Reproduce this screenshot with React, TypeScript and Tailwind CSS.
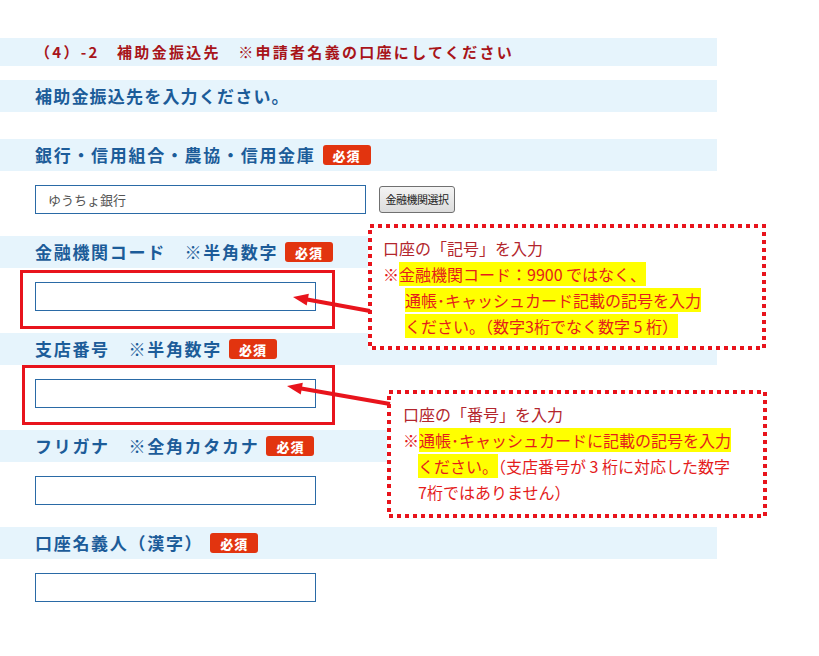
import React from "react";

const FONT = { fontFamily: '"Noto Sans CJK JP", "Noto Sans", sans-serif' };

const Badge: React.FC = () => (
  <span className="ml-[7px] inline-flex h-[20px] w-[48px] items-center justify-center rounded-[3px] bg-[#e2340f] text-[13px] font-black leading-none tracking-[1px] text-white">
    必須
  </span>
);

type FieldProps = {
  label: string;
  inputWidth: string;
  value?: string;
  withButton?: boolean;
  marked?: string;
};

const Field: React.FC<FieldProps> = ({ label, inputWidth, value, withButton, marked }) => (
  <div className="relative h-[97px]">
    <div className="flex h-[32px] items-center bg-[#e6f4fc] pl-[35px]">
      <span className="text-[17px] font-bold tracking-[1.7px] text-[#1c5c99]">{label}</span>
      <Badge />
    </div>
    <div className="mt-[14px] flex items-center gap-[13px] pl-[35px]">
      <div
        className={`flex h-[29px] items-center border border-[#2a6aa6] bg-white pl-[12px] text-[13px] text-[#555] ${inputWidth}`}
      >
        {value}
      </div>
      {withButton && (
        <button className="h-[27px] w-[76px] rounded-[3px] border border-[#707070] bg-gradient-to-b from-[#f4f4f4] to-[#dcdcdc] text-[11px] tracking-[-0.5px] text-[#222]">
          金融機関選択
        </button>
      )}
    </div>
    {marked && <div className={`absolute border-[3px] border-[#e8141c] ${marked}`} />}
  </div>
);

const DottedFrame: React.FC = () => (
  <svg className="absolute inset-0 h-full w-full" preserveAspectRatio="none">
    <rect x="2" y="2" width="calc(100% - 4px)" height="calc(100% - 4px)" fill="none" stroke="#e8141c" strokeWidth="4" strokeDasharray="4 4" />
  </svg>
);

const arrow = (tx: number, ty: number, ex: number, ey: number) => {
  const len = Math.hypot(ex - tx, ey - ty);
  const dx = (ex - tx) / len;
  const dy = (ey - ty) / len;
  const bx = tx + dx * 15;
  const by = ty + dy * 15;
  const px = -dy * 6;
  const py = dx * 6;
  return (
    <g>
      <line x1={bx - dx * 2} y1={by - dy * 2} x2={ex} y2={ey} stroke="#e8141c" strokeWidth="4" />
      <polygon points={`${tx},${ty} ${bx + px},${by + py} ${bx - px},${by - py}`} fill="#e8141c" />
    </g>
  );
};

const Hl: React.FC<{ children: React.ReactNode }> = ({ children }) => (
  <span className="bg-[#ffff00]">{children}</span>
);

export default function App() {
  return (
    <div className="relative h-[656px] w-[819px] overflow-hidden bg-white" style={FONT}>
      <div className="w-[717px] pt-[38px]">
        <div className="flex h-[28px] items-center bg-[#e6f4fc] pl-[35px] text-[15px] font-bold tracking-[2.3px] text-[#a8141a]">
          （4）-2　補助金振込先　※申請者名義の口座にしてください
        </div>
        <div className="mt-[14px] flex h-[32px] items-center bg-[#e6f4fc] pl-[35px] text-[17px] font-bold tracking-[1.2px] text-[#1c5c99]">
          補助金振込先を入力ください。
        </div>
        <div className="mt-[27px]">
          <Field label="銀行・信用組合・農協・信用金庫" inputWidth="w-[331px]" value="ゆうちょ銀行" withButton />
          <Field
            label="金融機関コード　※半角数字"
            inputWidth="w-[281px]"
            marked="left-[20px] top-[34px] h-[59px] w-[315px]"
          />
          <Field
            label="支店番号　※半角数字"
            inputWidth="w-[281px]"
            marked="left-[22px] top-[32px] h-[60px] w-[313px]"
          />
          <Field label="フリガナ　※全角カタカナ" inputWidth="w-[281px]" />
          <Field label="口座名義人（漢字）" inputWidth="w-[281px]" />
        </div>
      </div>

      {/* callout 1 */}
      <div className="absolute left-[368px] top-[224px] h-[126px] w-[398px] bg-white pl-[15px] pt-[11px] text-[16px] leading-[26px] text-[#e41c1c]">
        <DottedFrame />
        <div className="relative text-[#b3262d]">口座の「記号」を入力</div>
        <div className="relative">
          ※<Hl>金融機関コード：9900 ではなく、</Hl>
        </div>
        <div className="relative pl-[22px]">
          <Hl>通帳･キャッシュカード記載の記号を入力</Hl>
        </div>
        <div className="relative pl-[22px]">
          <Hl>ください。（数字3桁でなく数字 5 桁）</Hl>
        </div>
      </div>

      {/* callout 2 */}
      <div className="absolute left-[387px] top-[390px] h-[128px] w-[380px] bg-white pl-[16px] pt-[11px] text-[16px] leading-[26px] text-[#e41c1c]">
        <DottedFrame />
        <div className="relative text-[#b3262d]">口座の「番号」を入力</div>
        <div className="relative">
          ※<Hl>通帳･キャッシュカードに記載の記号を入力</Hl>
        </div>
        <div className="relative pl-[15px]">
          <Hl>ください。</Hl>（支店番号が 3 桁に対応した数字
        </div>
        <div className="relative pl-[15px]">7桁ではありません）</div>
      </div>

      <svg className="pointer-events-none absolute left-0 top-0" width="819" height="656">
        {arrow(293, 297, 370, 311)}
        {arrow(287, 386, 390, 404)}
      </svg>
    </div>
  );
}
